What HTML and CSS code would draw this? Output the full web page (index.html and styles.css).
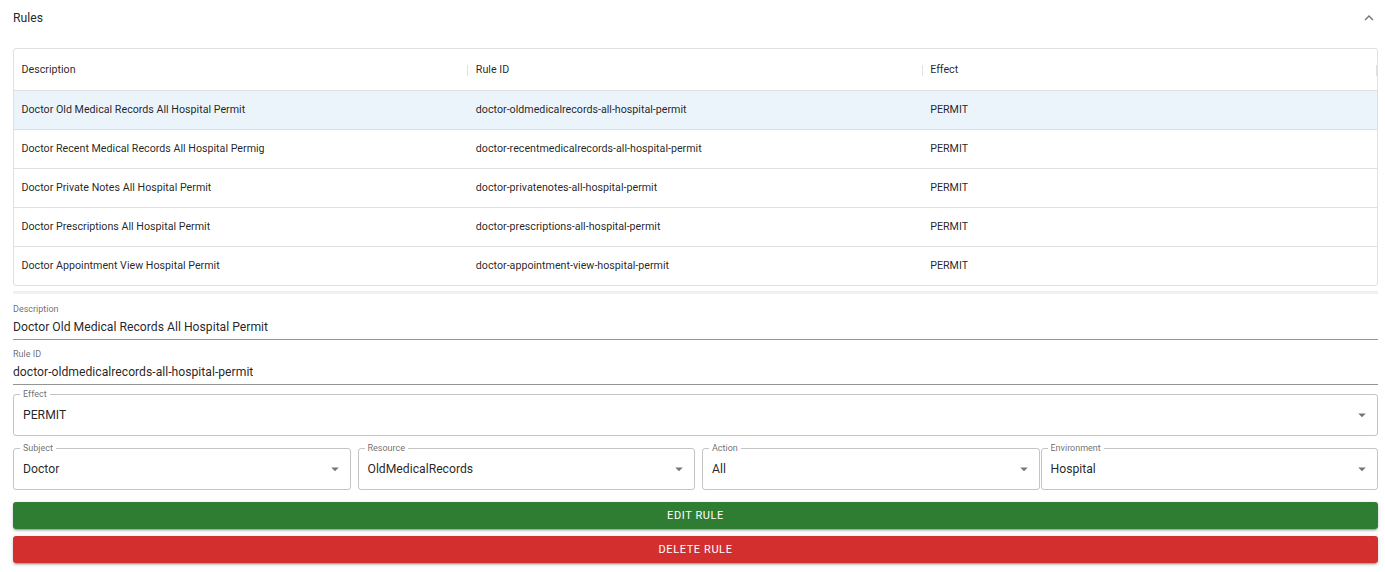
FILE: index.html
```html
<!DOCTYPE html>
<html>
<head>
<meta charset="utf-8">
<link rel="stylesheet" href="styles.css">
</head>
<body>
<div class="accordion">
  <div class="summary">
    <span class="title">Rules</span>
    <svg class="chev" viewBox="0 0 24 24"><path d="M12 8l-6 6 1.41 1.41L12 10.83l4.59 4.58L18 14z"/></svg>
  </div>
  <div class="details">
    <div class="grid">
      <div class="grid-row grid-head">
        <div class="cell">Description<span class="sep"></span></div>
        <div class="cell">Rule ID<span class="sep"></span></div>
        <div class="cell">Effect<span class="sep"></span></div>
      </div>
      <div class="grid-row selected">
        <div class="cell">Doctor Old Medical Records All Hospital Permit</div>
        <div class="cell">doctor-oldmedicalrecords-all-hospital-permit</div>
        <div class="cell">PERMIT</div>
      </div>
      <div class="grid-row">
        <div class="cell">Doctor Recent Medical Records All Hospital Permig</div>
        <div class="cell">doctor-recentmedicalrecords-all-hospital-permit</div>
        <div class="cell">PERMIT</div>
      </div>
      <div class="grid-row">
        <div class="cell">Doctor Private Notes All Hospital Permit</div>
        <div class="cell">doctor-privatenotes-all-hospital-permit</div>
        <div class="cell">PERMIT</div>
      </div>
      <div class="grid-row">
        <div class="cell">Doctor Prescriptions All Hospital Permit</div>
        <div class="cell">doctor-prescriptions-all-hospital-permit</div>
        <div class="cell">PERMIT</div>
      </div>
      <div class="grid-row last">
        <div class="cell">Doctor Appointment View Hospital Permit</div>
        <div class="cell">doctor-appointment-view-hospital-permit</div>
        <div class="cell">PERMIT</div>
      </div>
    </div>
    <div class="scrollbar"></div>

    <div class="std-field first">
      <div class="std-label">Description</div>
      <div class="std-input">Doctor Old Medical Records All Hospital Permit</div>
    </div>
    <div class="std-field">
      <div class="std-label">Rule ID</div>
      <div class="std-input">doctor-oldmedicalrecords-all-hospital-permit</div>
    </div>

    <div class="select effect">
      <span class="o-label">Effect</span>
      <span class="value">PERMIT</span>
      <svg class="arrow" viewBox="0 0 24 24"><path d="M7 10l5 5 5-5z"/></svg>
    </div>

    <div class="select-row">
      <div class="select s1">
        <span class="o-label">Subject</span>
        <span class="value">Doctor</span>
        <svg class="arrow" viewBox="0 0 24 24"><path d="M7 10l5 5 5-5z"/></svg>
      </div>
      <div class="select s2">
        <span class="o-label">Resource</span>
        <span class="value">OldMedicalRecords</span>
        <svg class="arrow" viewBox="0 0 24 24"><path d="M7 10l5 5 5-5z"/></svg>
      </div>
      <div class="select s3">
        <span class="o-label">Action</span>
        <span class="value">All</span>
        <svg class="arrow" viewBox="0 0 24 24"><path d="M7 10l5 5 5-5z"/></svg>
      </div>
      <div class="select s4">
        <span class="o-label">Environment</span>
        <span class="value">Hospital</span>
        <svg class="arrow" viewBox="0 0 24 24"><path d="M7 10l5 5 5-5z"/></svg>
      </div>
    </div>

    <button class="btn edit">Edit Rule</button>
    <button class="btn delete">Delete Rule</button>
  </div>
</div>
</body>
</html>
```
FILE: styles.css
```css
* { box-sizing: border-box; }
html, body { margin: 0; padding: 0; background: #fff; }
body {
  font-family: Roboto, "Liberation Sans", Arial, sans-serif;
  color: rgba(0,0,0,0.87);
  overflow: hidden;
}
.accordion {
  width: 1385px;
  padding: 0 7px 10px 13px;
  background: #fff;
  box-shadow: 0px 2px 1px -1px rgba(0,0,0,0.2), 0px 1px 1px 0px rgba(0,0,0,0.14), 0px 1px 3px 0px rgba(0,0,0,0.12);
}
.summary {
  height: 35px;
  display: flex;
  align-items: center;
  justify-content: space-between;
}
.title { font-size: 12.2px; line-height: 18px; }
.chev { width: 18px; height: 18px; fill: rgba(0,0,0,0.54); }
.details { padding-top: 13px; }

.grid {
  border: 1px solid #e0e0e0;
  border-radius: 3px;
  font-size: 10.7px;
  overflow: hidden;
}
.grid-row {
  display: grid;
  grid-template-columns: 1fr 1fr 1fr;
  height: 39px;
  border-bottom: 1px solid #e0e0e0;
}
.grid-row.last { border-bottom: none; height: 38px; }
.grid-head { height: 42px; }
.grid-row.selected { background: #ebf3fb; }
.cell {
  position: relative;
  display: flex;
  align-items: center;
  padding: 0 7.5px 1px;
  white-space: nowrap;
}
.grid-head .cell { padding-bottom: 0; }
.sep {
  position: absolute;
  right: 0;
  top: 50%;
  width: 1px;
  height: 11px;
  margin-top: -5px;
  background: #e0e0e0;
}
.scrollbar {
  margin-top: 5px;
  height: 3px;
  background: #f0f0f0;
}

.std-field { margin-top: 8px; }
.std-field.first { margin-top: 9px; }
.std-label {
  font-size: 9px;
  line-height: 12px;
  color: rgba(0,0,0,0.6);
}
.std-input {
  font-size: 12.2px;
  line-height: 24px;
  height: 25px;
  border-bottom: 1px solid rgba(0,0,0,0.42);
}

.select {
  position: relative;
  height: 42px;
  border: 1px solid rgba(0,0,0,0.23);
  border-radius: 3px;
  display: flex;
  align-items: center;
  padding: 0 6px 0 9px;
}
.select.effect { margin-top: 9px; }
.o-label {
  position: absolute;
  top: -7px;
  left: 6px;
  padding: 0 3px;
  background: #fff;
  font-size: 9px;
  line-height: 12px;
  color: rgba(0,0,0,0.6);
}
.value { flex: 1; font-size: 12.2px; line-height: 16px; }
.arrow { width: 18px; height: 18px; fill: rgba(0,0,0,0.54); }

.select-row {
  display: flex;
  margin-top: 12px;
}
.select-row .select { flex: 1 1 0; min-width: 0; }
.select-row .s1, .select-row .s2 { margin-right: 7px; }
.select-row .s3 { margin-right: 1px; }

.btn {
  display: block;
  width: 100%;
  height: 27px;
  border: none;
  border-radius: 3px;
  color: #fff;
  font-family: Roboto, "Liberation Sans", Arial, sans-serif;
  font-size: 11px;
  font-weight: 400;
  letter-spacing: 0.6px;
  text-transform: uppercase;
  box-shadow: 0px 3px 1px -2px rgba(0,0,0,0.2), 0px 2px 2px 0px rgba(0,0,0,0.14), 0px 1px 5px 0px rgba(0,0,0,0.12);
  padding: 0;
}
.btn.edit { background: #2e7d32; margin-top: 12px; }
.btn.delete { background: #d32f2f; margin-top: 7px; }
```
